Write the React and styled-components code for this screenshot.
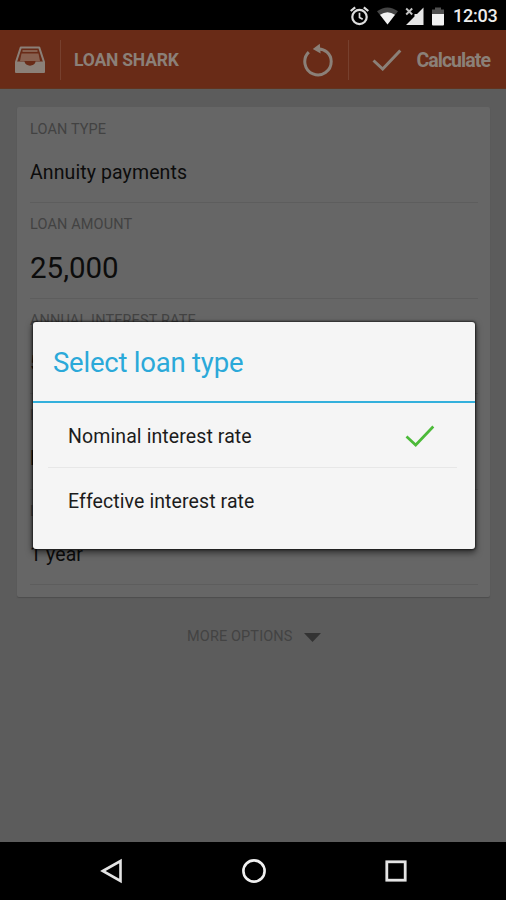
import React, { useState } from "react";
import styled, { createGlobalStyle } from "styled-components";

const GlobalStyle = createGlobalStyle`
  * {
    box-sizing: border-box;
  }
  body {
    margin: 0;
    background: #000;
    font-family: Roboto, "Liberation Sans", sans-serif;
  }
`;

const Screen = styled.div`
  position: relative;
  display: flex;
  flex-direction: column;
  width: 506px;
  height: 900px;
  overflow: hidden;
  background: #5c5c5c;
`;

const StatusBar = styled.div`
  display: flex;
  align-items: center;
  justify-content: flex-end;
  height: 30px;
  padding-right: 9px;
  padding-top: 2px;
  background: #000;
`;

const StatusIcons = styled.div`
  display: flex;
  align-items: center;
  gap: 7px;
`;

const Clock = styled.span`
  width: 44px;
  margin-left: 8px;
  color: #ececec;
  font-size: 18px;
  font-weight: 500;
  line-height: 28px;
  letter-spacing: -0.25px;
  white-space: nowrap;
`;

const Toolbar = styled.header`
  display: flex;
  align-items: center;
  height: 59px;
  padding: 2px 16px 0 14px;
  background: #692b17;
  border-bottom: 1px solid #62341f;
  color: #8b8078;
`;

const ToolbarDivider = styled.div`
  width: 1px;
  height: 40px;
  margin: ${(props) => props.$margin};
  background: #77402e;
`;

const AppName = styled.h1`
  flex: 1;
  margin: 0;
  font-size: 17.5px;
  font-weight: 700;
  letter-spacing: -0.2px;
  white-space: nowrap;
`;

const ActionButton = styled.button`
  display: flex;
  align-items: center;
  gap: 14px;
  padding: 0;
  border: none;
  background: transparent;
  color: inherit;
  font-family: inherit;
  font-size: 19.5px;
  font-weight: 700;
  letter-spacing: -0.95px;
  cursor: pointer;
`;

const Content = styled.main`
  flex: 1;
  padding: 18px 16px 0 17px;
`;

const Card = styled.section`
  height: 490px;
  padding: 1px 12px 0 13px;
  border-radius: 2px;
  background: #666;
  box-shadow: 0 1px 1px #4d4d4d;
`;

const Field = styled.div`
  height: 95.4px;
  padding-top: 12px;
  border-bottom: 1px solid #5d5d5d;
`;

const FieldLabel = styled.div`
  color: #424242;
  font-size: 14.5px;
  line-height: 20px;
  letter-spacing: 0.12px;
`;

const FieldValue = styled.div`
  margin-top: 12px;
  height: 42px;
  color: #0c0c0c;
  font-size: ${(props) => (props.$large ? "29.5px" : "19.5px")};
  line-height: 42px;
  letter-spacing: ${(props) => (props.$large ? "0" : "0.1px")};
`;

const MoreOptions = styled.button`
  display: flex;
  align-items: center;
  gap: 11px;
  margin: 29px 0 0 170px;
  padding: 0;
  border: none;
  background: transparent;
  color: #434343;
  font-family: inherit;
  font-size: 14.5px;
  line-height: 22px;
  letter-spacing: 0.12px;
  white-space: nowrap;
`;

const NavBar = styled.nav`
  display: flex;
  align-items: center;
  justify-content: space-between;
  height: 58px;
  padding: 0 98px 0 99px;
  background: #000;
`;

// The dialog floats above the dimmed form
const Dialog = styled.div`
  position: absolute;
  top: 322px;
  left: 33px;
  width: 442px;
  height: 227px;
  border-radius: 3px;
  background: #f5f5f5;
  box-shadow: 0 0 2px 1px rgba(0, 0, 0, 0.55), 0 3px 6px 1px rgba(0, 0, 0, 0.5);
`;

const DialogTitle = styled.h2`
  height: 81px;
  margin: 0;
  padding-left: 20px;
  border-bottom: 2px solid #33b0dc;
  color: #2ba9d9;
  font-size: 27.5px;
  font-weight: 400;
  line-height: 82px;
  letter-spacing: -0.22px;
`;

const OptionList = styled.div`
  padding: 0 18px 0 15px;
`;

const Option = styled.div`
  display: flex;
  align-items: center;
  justify-content: space-between;
  height: ${(props) => (props.$last ? "64px" : "65px")};
  padding: 2px 22px 0 20px;
  border-bottom: ${(props) => (props.$last ? "none" : "1px solid #e7e7e7")};
  color: #1c1c1c;
  font-size: 19.5px;
  letter-spacing: 0.1px;
  cursor: pointer;
`;

const CheckIcon = ({ color, stroke }) => (
  <svg width="30" height="22" viewBox="0 0 30 22" fill="none">
    <path d="M1.5 11.5 L10.7 20 L28.3 1.5" stroke={color} strokeWidth={stroke} />
  </svg>
);

const AlarmIcon = () => (
  <svg width="20" height="20" viewBox="0 0 20 20" fill="none" stroke="#dedede">
    <circle cx="10.5" cy="11" r="7.2" strokeWidth="2.2" />
    <path d="M1.7 5 L6.2 1.3 M14.8 1.3 L19.3 5" strokeWidth="2.2" />
    <path d="M10.5 6.8 V11.4 L13.7 13.3" strokeWidth="1.7" />
  </svg>
);

const WifiIcon = () => (
  <svg width="22" height="18" viewBox="0 0 22 18">
    <path d="M1 4.2 Q11.5 -3.4 22 4.2 L11.5 17.4 Z" fill="#444" />
    <path d="M4 7.8 Q11.5 2.8 19 7.8 L11.5 17.4 Z" fill="#f2f2f2" />
  </svg>
);

const SignalIcon = () => (
  <svg width="19" height="19" viewBox="0 0 19 19">
    <path d="M18.5 0.5 V18 H1 L9.5 9.5 V7 H12 Z" fill="#e6e6e6" />
    <path d="M1.2 1.5 L7.2 7.5 M7.2 1.5 L1.2 7.5" stroke="#c4c4c4" strokeWidth="1.9" />
  </svg>
);

const BatteryIcon = () => (
  <svg width="14" height="19" viewBox="0 0 14 19">
    <path d="M4 0.5 H10 V2.5 H13 V8 H1 V2.5 H4 Z" fill="#505050" />
    <path d="M1 7 H13 V17.5 Q13 18.5 12 18.5 H2 Q1 18.5 1 17.5 Z" fill="#f2f2f2" />
  </svg>
);

const InboxIcon = () => (
  <svg width="32" height="28" viewBox="0 0 32 28">
    <path
      d="M2 16 L6.8 1.4 H25.2 L30 16"
      fill="none"
      stroke="currentColor"
      strokeWidth="2"
      strokeLinejoin="round"
    />
    <path d="M8.5 4 H23.5 V6 H8.5 Z M7.5 7.5 H24.5 L26 15 H6 Z" fill="#87604f" />
    <path
      d="M1 15.5 H10.5 C11 21 21 21 21.5 15.5 H31 V26 Q31 27 30 27 H2 Q1 27 1 26 Z"
      fill="currentColor"
    />
  </svg>
);

const ResetIcon = () => (
  <svg width="32" height="34" viewBox="0 0 32 34" fill="none">
    <path
      d="M15 6 C22.8 5 29.2 11 29.2 18.3 A13.2 13.2 0 1 1 6.8 9.2"
      stroke="currentColor"
      strokeWidth="3"
    />
    <path d="M17.8 0.8 L18.6 10.6 L10.8 6 Z" fill="currentColor" />
  </svg>
);

const fields = [
  { label: "LOAN TYPE", value: "Annuity payments" },
  { label: "LOAN AMOUNT", value: "25,000", large: true },
  { label: "ANNUAL INTEREST RATE", value: "5%" },
  { label: "INTEREST TYPE", value: "Nominal interest rate" },
  { label: "LOAN TERM", value: "1 year" },
];

const options = ["Nominal interest rate", "Effective interest rate"];

const App = () => {
  const [selected, setSelected] = useState(0);

  return (
    <>
      <GlobalStyle />
      <Screen>
        <StatusBar>
          <StatusIcons>
            <AlarmIcon />
            <WifiIcon />
            <SignalIcon />
            <BatteryIcon />
          </StatusIcons>
          <Clock>12:03</Clock>
        </StatusBar>
        <Toolbar>
          <InboxIcon />
          <ToolbarDivider $margin="0 13px 0 14px" />
          <AppName>LOAN SHARK</AppName>
          <ActionButton>
            <ResetIcon />
          </ActionButton>
          <ToolbarDivider $margin="0 23px 0 14px" />
          <ActionButton>
            <CheckIcon color="currentColor" stroke={3} />
            Calculate
          </ActionButton>
        </Toolbar>
        <Content>
          <Card>
            {fields.map((field) => (
              <Field key={field.label}>
                <FieldLabel>{field.label}</FieldLabel>
                <FieldValue $large={field.large}>{field.value}</FieldValue>
              </Field>
            ))}
          </Card>
          <MoreOptions>
            MORE OPTIONS
            <svg width="17" height="9" viewBox="0 0 17 9">
              <path d="M0 0 H17 L8.5 9 Z" fill="#333" />
            </svg>
          </MoreOptions>
        </Content>
        <NavBar>
          <svg width="24" height="26" viewBox="0 0 24 26" fill="none">
            <path d="M3.8 13 L21.5 3 V23 Z" stroke="#e4e4e4" strokeWidth="2.6" />
          </svg>
          <svg width="26" height="26" viewBox="0 0 26 26" fill="none">
            <circle cx="13" cy="13" r="10.6" stroke="#f0f0f0" strokeWidth="2.6" />
          </svg>
          <svg width="24" height="24" viewBox="0 0 24 24" fill="none">
            <rect x="2.8" y="2.8" width="18.4" height="18.4" stroke="#e4e4e4" strokeWidth="2.8" />
          </svg>
        </NavBar>
        <Dialog>
          <DialogTitle>Select loan type</DialogTitle>
          <OptionList>
            {options.map((option, i) => (
              <Option
                key={option}
                $last={i === options.length - 1}
                onClick={() => setSelected(i)}
              >
                {option}
                {selected === i && <CheckIcon color="#4cba39" stroke={2.7} />}
              </Option>
            ))}
          </OptionList>
        </Dialog>
      </Screen>
    </>
  );
};

export default App;
